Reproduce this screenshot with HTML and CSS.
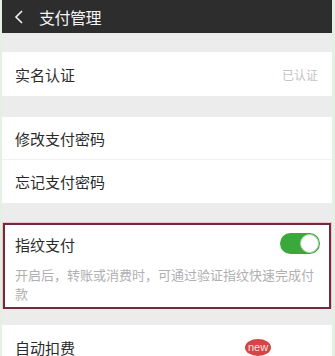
FILE: index.html
```html
<!DOCTYPE html>
<html lang="zh">
<head>
<meta charset="utf-8">
<link rel="stylesheet" href="styles.css">
</head>
<body>
<div class="page">
  <header class="topbar">
    <svg class="back" width="12" height="16" viewBox="0 0 12 16"><path d="M9 2 L3 8 L9 14" fill="none" stroke="#f2f2f2" stroke-width="1.6"/></svg>
    <span class="title">支付管理</span>
  </header>
  <div class="gap g1"></div>
  <div class="group">
    <div class="row r1"><span class="label">实名认证</span><span class="value">已认证</span></div>
  </div>
  <div class="gap g2"></div>
  <div class="group">
    <div class="row r2 divided"><span class="label">修改支付密码</span></div>
    <div class="row r2"><span class="label">忘记支付密码</span></div>
  </div>
  <div class="gap g3"></div>
  <div class="finger">
    <div class="finger-head">
      <span class="label">指纹支付</span>
      <span class="switch"><span class="knob"></span></span>
    </div>
    <p class="desc">开启后，转账或消费时，可通过验证指纹快速完成付款</p>
  </div>
  <div class="gap g4"></div>
  <div class="group">
    <div class="row r3"><span class="label">自动扣费</span><span class="badge">new</span></div>
  </div>
</div>
</body>
</html>
```
FILE: styles.css
```css
html, body {
  margin: 0;
  padding: 0;
  background: #ececec;
  overflow: hidden;
}
.page {
  width: 335px;
  height: 356px;
  box-sizing: border-box;
  border-left: 2px solid #e2f1e2;
  border-right: 3px solid #e2f1e2;
  background: #ececec;
  font-family: "Noto Sans CJK SC", "Noto Sans", sans-serif;
  overflow: hidden;
}
.topbar {
  height: 33px;
  background: #2d2d2d;
  display: flex;
  align-items: center;
  padding-left: 11px;
  gap: 14px;
}
.title {
  color: #f4f4f4;
  font-size: 16px;
  letter-spacing: -0.5px;
}
.gap { background: #ececec; }
.g1 { height: 19px; }
.g2 { height: 21px; }
.g3 { height: 20px; }
.g4 { height: 16px; }
.group { background: #fff; }
.row {
  display: flex;
  align-items: center;
  justify-content: space-between;
  padding: 0 14px 0 13px;
  box-sizing: border-box;
}
.r1 { height: 44px; }
.r2 { height: 43px; }
.r3 { height: 44px; }
.divided { border-bottom: 1px solid #f0f0f0; }
.label {
  font-size: 15px;
  color: #2a2a2a;
}
.value {
  font-size: 12px;
  color: #c4c4c4;
}
.badge {
  background: #d64545;
  color: #fbe3e3;
  font-size: 11px;
  line-height: 17px;
  width: 26px;
  text-align: center;
  border-radius: 50%;
  margin-right: 47px;
  font-family: "Liberation Sans", sans-serif;
}
.finger {
  background: #fff;
  margin: 0 1px 0 1px;
  border: 2px solid #742a3d;
  box-shadow: 0 0 0 1px #f3c3cd;
  height: 86px;
  box-sizing: border-box;
}
.finger-head {
  height: 38px;
  display: flex;
  align-items: center;
  justify-content: space-between;
  padding: 0 9px 0 10px;
}
.switch {
  width: 40px;
  height: 21px;
  border-radius: 11px;
  background: #3aa83a;
  position: relative;
  margin-top: -2px;
}
.knob {
  position: absolute;
  right: 1px;
  top: 1px;
  width: 17px;
  height: 17px;
  border-radius: 50%;
  background: #fff;
  border: 1px solid #b8d6b8;
}
.desc {
  margin: 0;
  padding: 2px 12px 0 10px;
  font-size: 13px;
  line-height: 19px;
  color: #b0b0b0;
}
```
